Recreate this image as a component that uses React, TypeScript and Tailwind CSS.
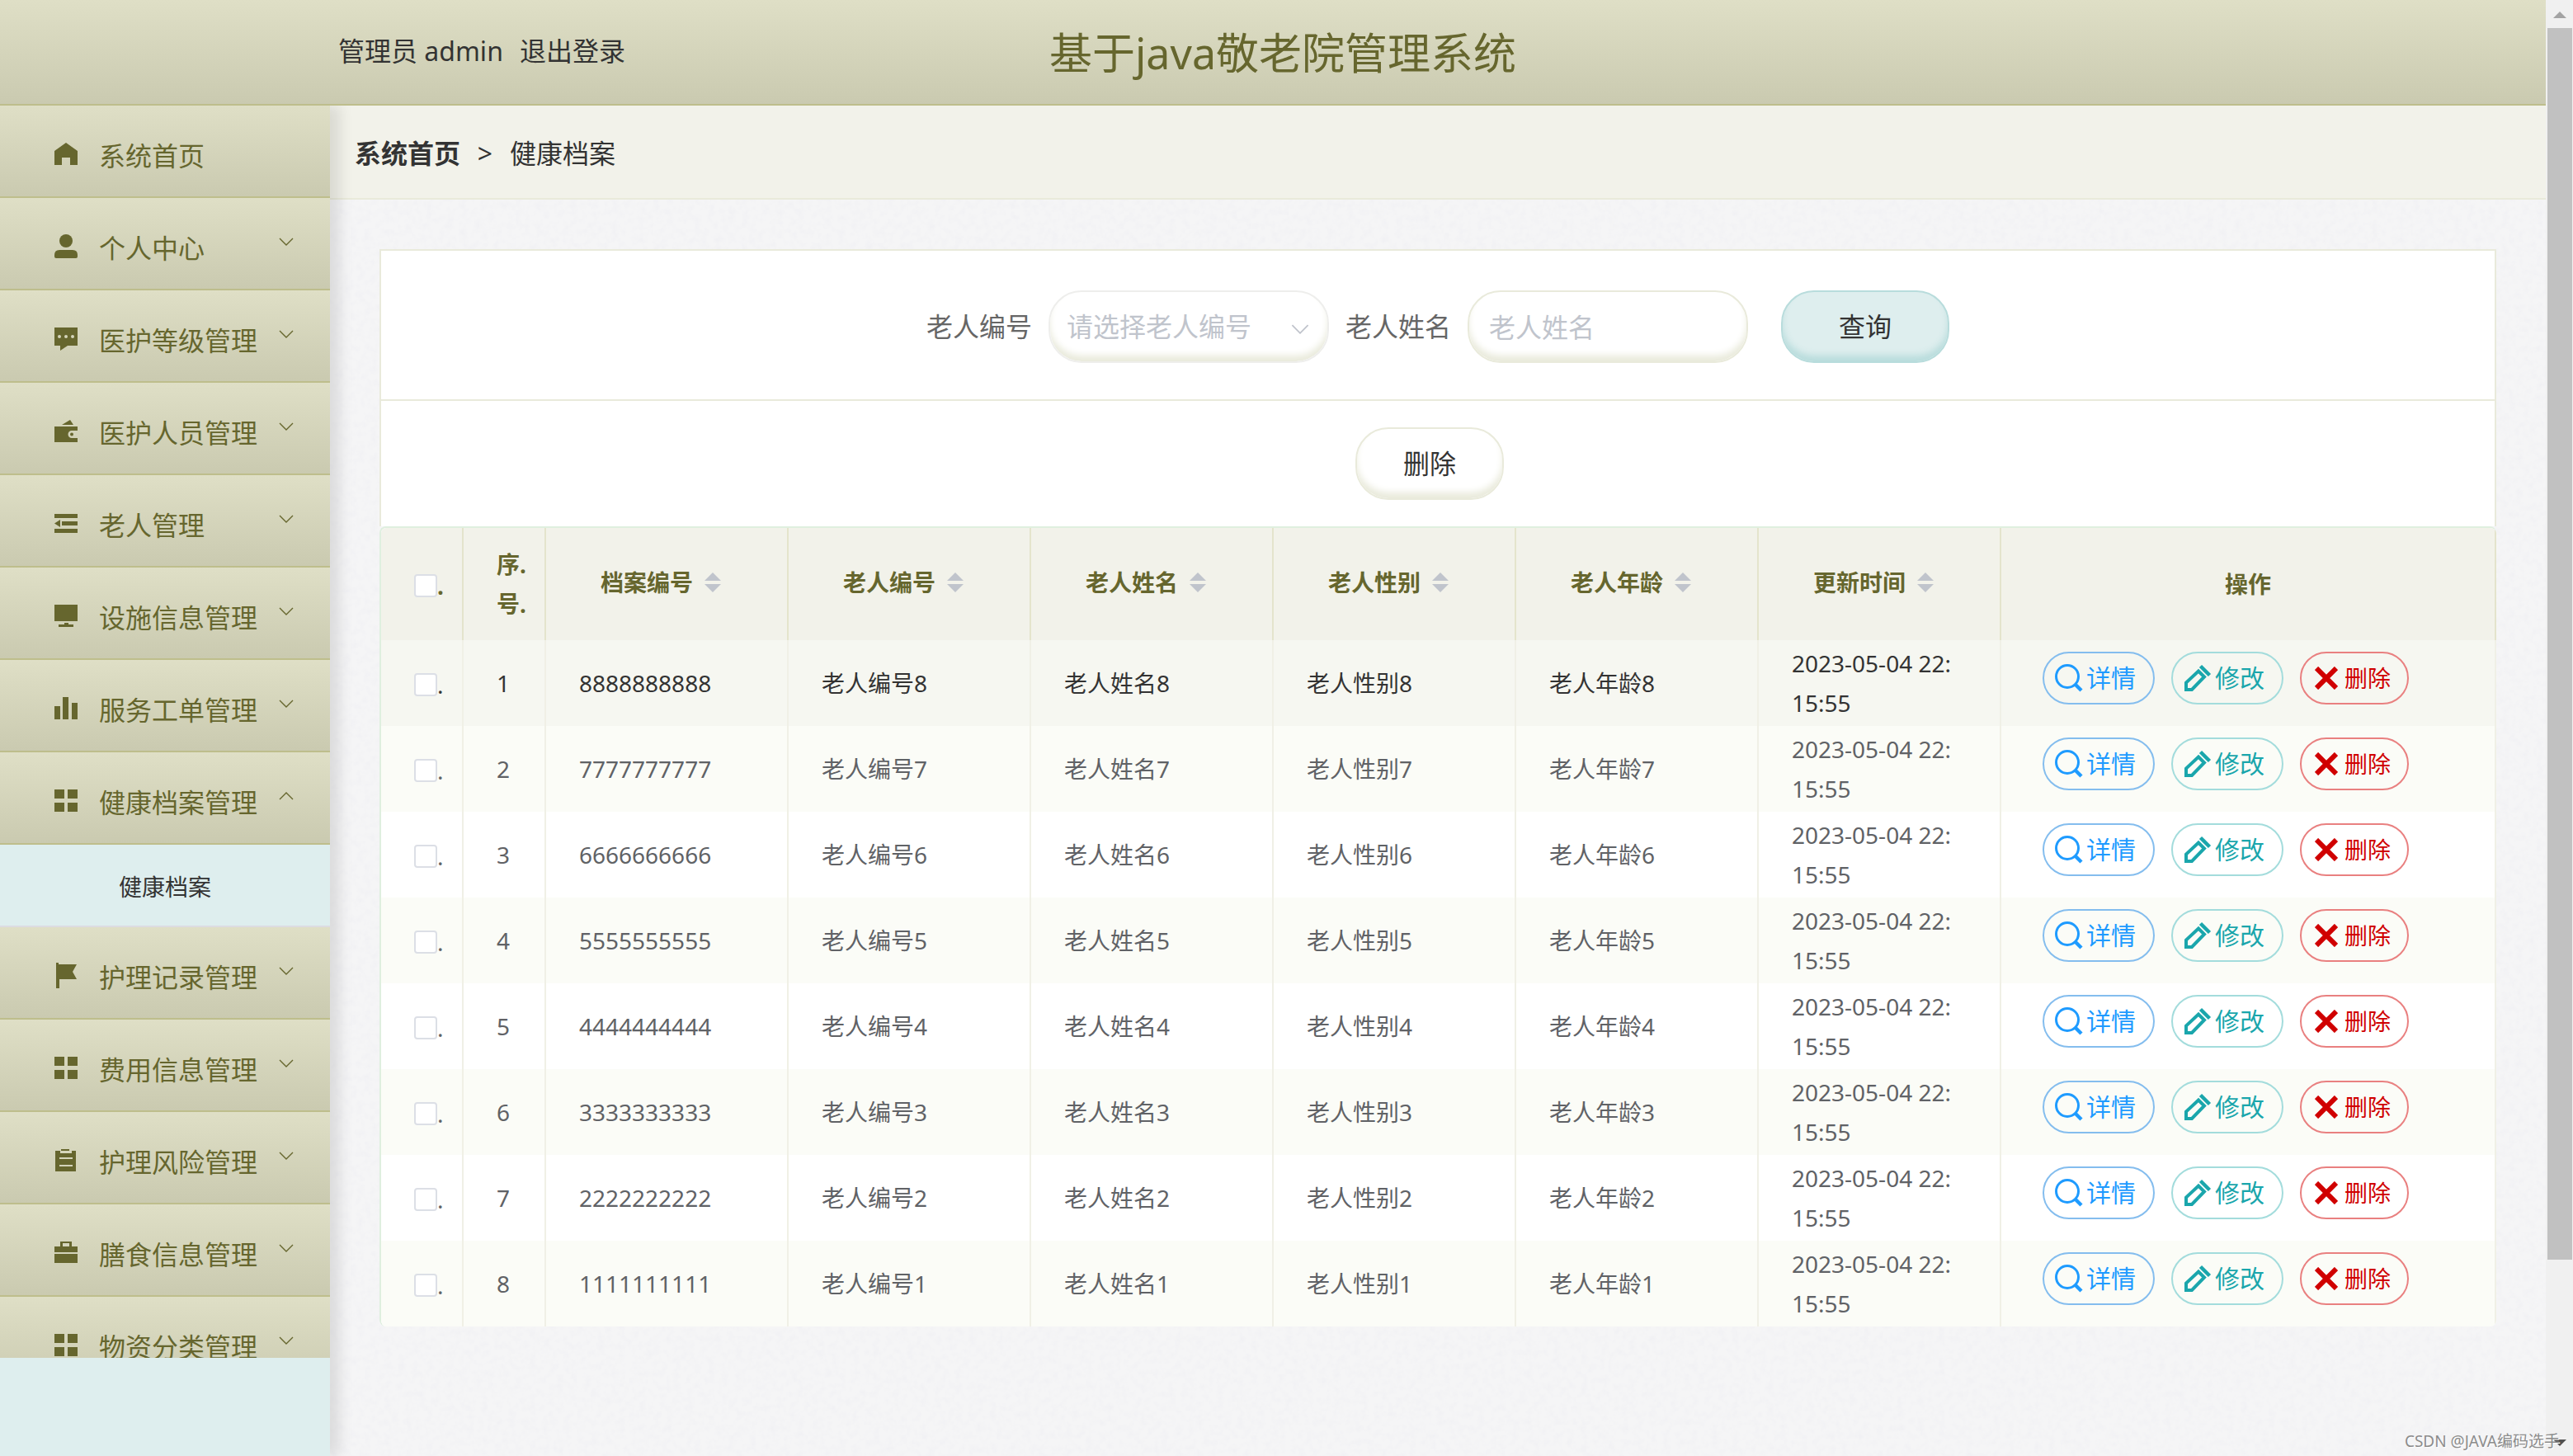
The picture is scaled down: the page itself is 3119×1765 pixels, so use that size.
import React from "react";

const menuItems = [
  { label: "系统首页", icon: "home" },
  { label: "个人中心", icon: "user", arrow: "down" },
  { label: "医护等级管理", icon: "chat", arrow: "down" },
  { label: "医护人员管理", icon: "wallet", arrow: "down" },
  { label: "老人管理", icon: "fold", arrow: "down" },
  { label: "设施信息管理", icon: "monitor", arrow: "down" },
  { label: "服务工单管理", icon: "bars", arrow: "down" },
  { label: "健康档案管理", icon: "grid", arrow: "up", child: "健康档案" },
  { label: "护理记录管理", icon: "flag", arrow: "down" },
  { label: "费用信息管理", icon: "grid", arrow: "down" },
  { label: "护理风险管理", icon: "order", arrow: "down" },
  { label: "膳食信息管理", icon: "case", arrow: "down" },
  { label: "物资分类管理", icon: "grid", arrow: "down" },
];

const iconShapes: Record<string, React.ReactNode> = {
  home: <path d="M14 0 28 10V27H19V18H9V27H0V10Z" />,
  user: (
    <>
      <circle cx="14" cy="7" r="8" />
      <path d="M6 18H22Q28 18 28 24V26Q28 28 26 28H2Q0 28 0 26V24Q0 18 6 18Z" />
    </>
  ),
  chat: (
    <path
      fillRule="evenodd"
      d="M0 0H28V22H16L7 28V22H0ZM4 11a2 2 0 1 0 4 0a2 2 0 1 0-4 0ZM12 11a2 2 0 1 0 4 0a2 2 0 1 0-4 0ZM20 11a2 2 0 1 0 4 0a2 2 0 1 0-4 0Z"
    />
  ),
  wallet: (
    <>
      <path d="M9 6 19 0 23 6Z" />
      <path d="M0 8H28V13H21a4.500 4.500 0 0 0 0 9H28V27H0Z" />
      <circle cx="21" cy="17.500" r="2" />
    </>
  ),
  fold: (
    <>
      <path d="M0 2H28V7H0ZM9 11H28V16H9ZM0 20H28V25H0Z" />
      <path d="M7 9V18L0 13.500Z" />
    </>
  ),
  monitor: <path d="M0 0H28V20H0ZM12 22H17V24H23V27H5V24H12Z" />,
  bars: <path d="M0 11H7V27H0ZM10 0H17V27H10ZM21 7H28V27H21Z" />,
  grid: <path d="M0 0H12V11H0ZM16 0H28V11H16ZM0 16H12V27H0ZM16 16H28V27H16Z" />,
  flag: <path d="M2-2H5V0H27L22 9 27 18H6V29H2Z" />,
  order: (
    <>
      <path fillRule="evenodd" d="M1 2H7V5H21V2H26V27H1ZM6 10V12H22V10ZM6 19V21H22V19Z" />
      <path d="M8 0H18V2H8Z" />
    </>
  ),
  case: (
    <path fillRule="evenodd" d="M7 6V0H21V6H28V13H0V6ZM10 2V6H18V2ZM0 15H28V26H0Z" />
  ),
};

function MenuIcon({ name }: { name: string }) {
  return (
    <svg className="h-7 w-7 overflow-visible" viewBox="0 0 28 28" fill="currentColor" aria-hidden="true">
      {iconShapes[name]}
    </svg>
  );
}

function Chevron({ up = false, className }: { up?: boolean; className: string }) {
  return (
    <svg className={className} viewBox="0 0 18 10" fill="none" stroke="currentColor" aria-hidden="true">
      <path d={up ? "M1 9 9 1 17 9" : "M1 1 9 9 17 1"} />
    </svg>
  );
}

function Sidebar() {
  return (
    <nav className="relative z-10 flex w-[400px] shrink-0 flex-col bg-[#deeeee] pb-[119px] shadow-[12px_0_16px_rgba(0,0,0,0.1)]">
      <ul className="min-h-0 flex-1 overflow-hidden">
        {menuItems.map((item) => (
          <li key={item.label}>
            <button
              type="button"
              className="flex h-28 w-full items-center border-b-2 border-[#bebe8c] bg-linear-to-b from-[#dfdfc6] to-[#cacab0] pr-11 pl-[66px] text-left text-[32px] text-[#66662e]"
            >
              <span className="pt-2">
                <MenuIcon name={item.icon} />
              </span>
              <span className="flex-1 pt-3 pl-[26px] whitespace-nowrap">{item.label}</span>
              {item.arrow && (
                <span className="-ml-10 pb-1">
                  <Chevron up={item.arrow === "up"} className="h-[10px] w-[18px] [stroke-width:1.4]" />
                </span>
              )}
            </button>
            {item.child && (
              <a
                href="#health"
                className="flex h-[100px] items-center justify-center border-b-2 border-[#dcdce2] bg-[#deeeee] pt-1 text-[28px] text-[#333]"
              >
                {item.child}
              </a>
            )}
          </li>
        ))}
      </ul>
    </nav>
  );
}

function SearchBar() {
  return (
    <>
      <form className="flex items-center justify-center border-b-2 border-[#e9eadb] pt-12 pb-11 text-[32px]">
        <label htmlFor="elder-no" className="mr-5 text-[#666]">
          老人编号
        </label>
        <span className="relative mr-5">
          <select
            id="elder-no"
            className="h-[88px] w-[340px] appearance-none rounded-[40px] border-2 border-[#eeeeec] bg-white pr-16 pl-5 text-[#c0c4cc] shadow-[inset_0_-8px_8px_-1px_#e9eadb]"
          >
            <option>请选择老人编号</option>
          </select>
          <Chevron className="absolute top-[41px] right-6 h-3 w-[22px] text-[#c0c4cc] [stroke-width:1.5]" />
        </span>
        <label htmlFor="elder-name" className="mr-5 text-[#666]">
          老人姓名
        </label>
        <input
          id="elder-name"
          type="text"
          placeholder="老人姓名"
          className="mr-10 h-[88px] w-[340px] rounded-[40px] border-2 border-[#e9eadb] bg-white px-6 shadow-[inset_0_-8px_8px_-1px_#e9eadb] placeholder:text-[#c0c4cc]"
        />
        <button
          type="button"
          className="h-[88px] w-[204px] rounded-[40px] border-2 border-[#b8dcdc] bg-[#deeeee] text-[#333] shadow-[inset_0_-8px_8px_-1px_#b8dcdc]"
        >
          查询
        </button>
      </form>
      <div className="flex justify-center py-8 pr-5">
        <button
          type="button"
          className="h-[88px] w-[180px] rounded-[40px] border-2 border-[#e9eadb] bg-white text-[32px] text-[#333] shadow-[inset_0_-8px_8px_-1px_#e9eadb]"
        >
          删除
        </button>
      </div>
    </>
  );
}

const boxClass =
  "block h-7 w-7 appearance-none rounded-[4px] border-2 border-[#dcdfe6] bg-white checked:bg-[#66662e]";

const sortableColumns = ["档案编号", "老人编号", "老人姓名", "老人性别", "老人年龄", "更新时间"];

function RowActions() {
  return (
    <div className="flex gap-5 pb-3 pl-[50px]">
      <button
        type="button"
        className="flex h-16 w-[136px] items-center gap-1 rounded-full border-2 border-[#84bdee] pl-[13px] text-[30px] whitespace-nowrap text-[#1e9bff]"
      >
        <svg className="h-[34px] w-[34px] shrink-0" viewBox="0 0 34 34" fill="none" stroke="currentColor" aria-hidden="true">
          <circle cx="15" cy="15" r="13.500" strokeWidth="3" />
          <path d="M24 24 32 32" strokeWidth="4.500" />
        </svg>
        详情
      </button>
      <button
        type="button"
        className="flex h-16 w-[136px] items-center gap-1 rounded-full border-2 border-[#a3dcdc] pl-[13px] text-[30px] whitespace-nowrap text-[#1aa6ac]"
      >
        <svg className="h-[34px] w-[34px] shrink-0" viewBox="0 0 34 34" fill="none" stroke="currentColor" aria-hidden="true">
          <path d="M3 31V22.500L18 8.500 25 15.500 10 31Z" strokeWidth="4" />
          <path d="M20.500 2.500 31.500 13.500" strokeWidth="4.500" />
        </svg>
        修改
      </button>
      <button
        type="button"
        className="flex h-16 w-[132px] items-center gap-2 rounded-full border-2 border-[#e98080] pl-4 text-[28px] whitespace-nowrap text-[#d00000]"
      >
        <svg className="h-7 w-7 shrink-0" viewBox="0 0 28 28" fill="none" stroke="currentColor" aria-hidden="true">
          <path d="M2 2 26 26M26 2 2 26" strokeWidth="6" />
        </svg>
        删除
      </button>
    </div>
  );
}

function RecordTable() {
  return (
    <div className="overflow-hidden rounded-lg border-t-2 border-l-2 border-[#dfefdf]">
      <table className="w-full table-fixed border-separate border-spacing-0 bg-white text-[28px] leading-[48px]">
        <colgroup>
          <col className="w-[100px]" />
          <col className="w-[100px]" />
          <col span={6} />
          <col className="w-[600px]" />
        </colgroup>
        <thead className="bg-[#f2f2ea] text-[#66662e]">
          <tr className="h-[136px]">
            <th className="border-r-2 border-[#e4e4cc] pl-10">
              <span className="flex items-center pt-1">
                <input type="checkbox" aria-label="全选" className={boxClass} />
                <span className="leading-7">.</span>
              </span>
            </th>
            <th className="border-r-2 border-[#e4e4cc] pr-4 pl-10 text-left break-all">序.号.</th>
            {sortableColumns.map((name) => (
              <th key={name} className="border-r-2 border-[#e4e4cc]">
                <span className="flex items-center justify-center pb-1">
                  {name}
                  <span className="flex w-12 flex-col items-center gap-1">
                    <span className="border-x-10 border-b-10 border-x-transparent border-b-[#c0c4cc]" />
                    <span className="border-x-10 border-t-10 border-x-transparent border-t-[#c0c4cc]" />
                  </span>
                </span>
              </th>
            ))}
            <th className="border-r-2 border-[#e4e4cc]">操作</th>
          </tr>
        </thead>
        <tbody className="[&_td]:border-r-2 [&_td]:border-[#f0f0e6]">
          {[8, 7, 6, 5, 4, 3, 2, 1].map((n, i) => (
            <tr
              key={n}
              className="h-[104px] text-[#606266] first:bg-[#f6f7f1] first:text-[#333] even:bg-[#fbfcf7]"
            >
              <td className="pl-10">
                <span className="flex items-center pt-1">
                  <input type="checkbox" aria-label={`选择第${i + 1}行`} className={boxClass} />
                  <span className="leading-7">.</span>
                </span>
              </td>
              <td className="pl-10">{i + 1}</td>
              <td className="pl-10">{String(n).repeat(10)}</td>
              <td className="pl-10">老人编号{n}</td>
              <td className="pl-10">老人姓名{n}</td>
              <td className="pl-10">老人性别{n}</td>
              <td className="pl-10">老人年龄{n}</td>
              <td className="pr-12 pl-10 leading-[48px] break-all">2023-05-04 22:15:55</td>
              <td>
                <RowActions />
              </td>
            </tr>
          ))}
        </tbody>
      </table>
    </div>
  );
}

function PaperTexture() {
  return (
    <svg className="absolute inset-0 h-full w-full" aria-hidden="true">
      <filter id="paper">
        <feTurbulence type="fractalNoise" baseFrequency="0.12" numOctaves="3" seed="4" />
        <feColorMatrix values="0 0 0 0 0.82  0 0 0 0 0.82  0 0 0 0 0.87  0.7 0 0 0 -0.28" />
      </filter>
      <rect width="100%" height="100%" filter="url(#paper)" />
    </svg>
  );
}

export default function App() {
  return (
    <div className="relative flex h-screen overflow-hidden font-['Noto_Sans','Noto_Sans_CJK_SC',sans-serif] leading-normal text-[#333]">
      <div className="flex min-w-0 flex-1 flex-col">
        <header className="relative z-20 grid h-32 shrink-0 grid-cols-[1fr_auto_1fr] items-center border-b-2 border-[#bebe8c] bg-linear-to-b from-[#dfdfc6] to-[#cacab0] pl-6">
          <div className="flex gap-5 pb-0.5 pl-[386px] text-[32px] whitespace-nowrap">
            <span>管理员 admin</span>
            <a href="#logout">退出登录</a>
          </div>
          <h1 className="pt-0.5 text-[52px] whitespace-nowrap text-[#66662e]">基于java敬老院管理系统</h1>
        </header>
        <div className="flex min-h-0 flex-1">
          <Sidebar />
          <main className="relative min-w-0 flex-1 bg-[#f5f5f6]">
            <PaperTexture />
            <div className="relative">
              <div className="flex h-[114px] items-center border-b-2 border-[#e9eadb] bg-[#f2f2ea] pt-1 pl-[30px] text-[32px]">
                <a href="#home" className="font-bold">
                  系统首页
                </a>
                <span className="w-[60px] text-center text-[32px]">&gt;</span>
                <span>健康档案</span>
              </div>
              <div className="p-[60px]">
                <div className="border-x-2 border-t-2 border-[#e9eadb] bg-white">
                  <SearchBar />
                </div>
                <RecordTable />
              </div>
            </div>
          </main>
        </div>
      </div>
      <div className="flex w-[33px] shrink-0 flex-col items-center bg-[#f0f0f0] pt-3.5 pb-3">
        <span className="border-x-8 border-b-8 border-x-transparent border-b-[#a3a3a3]" />
        <div className="mt-3 h-[1493px] w-[30px] bg-[#c1c1c1]" />
        <span className="mt-auto border-x-8 border-t-8 border-x-transparent border-t-[#505050]" />
      </div>
      <p className="absolute right-4 bottom-1 z-30 text-[19px] text-[#8c8c8c] [text-shadow:1px_1px_0_#fff]">
        CSDN @JAVA编码选手
      </p>
    </div>
  );
}
